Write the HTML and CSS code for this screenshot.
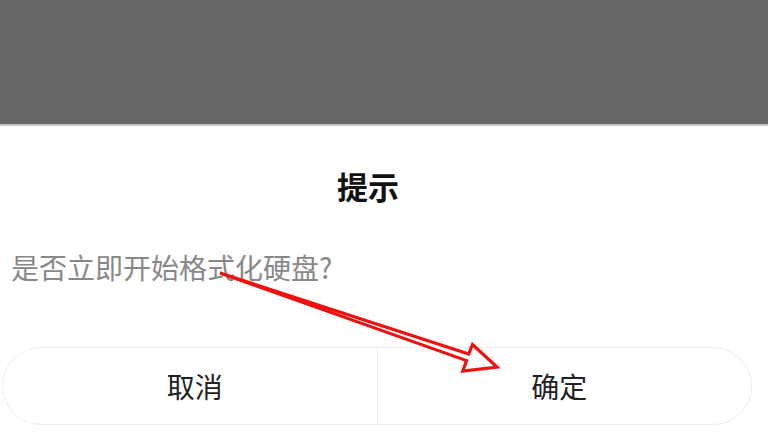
FILE: index.html
```html
<!DOCTYPE html>
<html lang="zh-CN">
<head>
<meta charset="utf-8">
<link rel="stylesheet" href="styles.css">
</head>
<body>
<div class="page">
  <div class="overlay"></div>
  <div class="dialog">
    <div class="title">提示</div>
    <div class="message">是否立即开始格式化硬盘?</div>
    <div class="actions">
      <div class="btn btn-cancel">取消</div>
      <div class="btn btn-ok">确定</div>
    </div>
  </div>
  <svg class="arrow" width="768" height="446" viewBox="0 0 768 446">
    <polygon points="220,273 468.7,354 472.5,344.5 497,367 462.8,371 466.5,360.6" fill="#fff" stroke="#f01010" stroke-width="3.2" stroke-linejoin="miter"/>
  </svg>
</div>
</body>
</html>
```
FILE: styles.css
```css
html, body {
  margin: 0;
  padding: 0;
  background: #fff;
}
.page {
  position: relative;
  width: 768px;
  height: 446px;
  overflow: hidden;
  font-family: "Noto Sans CJK SC", "Noto Sans", sans-serif;
}
.overlay {
  height: 124px;
  background: #666666;
  border-bottom: 2px solid #c4c4c4;
}
.dialog {
  display: flex;
  flex-direction: column;
}
.title {
  margin-top: 40px;
  padding-right: 32px;
  height: 40px;
  line-height: 40px;
  text-align: center;
  font-size: 31px;
  font-weight: 700;
  color: #111;
}
.message {
  margin-top: 43px;
  margin-left: 11px;
  height: 36px;
  line-height: 36px;
  font-size: 28px;
  color: #888888;
}
.actions {
  margin-top: 62px;
  margin-left: 2px;
  width: 750px;
  height: 78px;
  box-sizing: border-box;
  border: 1px solid #ececec;
  border-radius: 40px;
  display: flex;
}
.btn {
  flex: 1;
  display: flex;
  align-items: center;
  justify-content: center;
  font-size: 28px;
  color: #222;
}
.btn-cancel {
  padding-left: 10px;
}
.btn-ok {
  padding-right: 10px;
  border-left: 1px solid #eeeeee;
}
.arrow {
  position: absolute;
  left: 0;
  top: 0;
}
```
